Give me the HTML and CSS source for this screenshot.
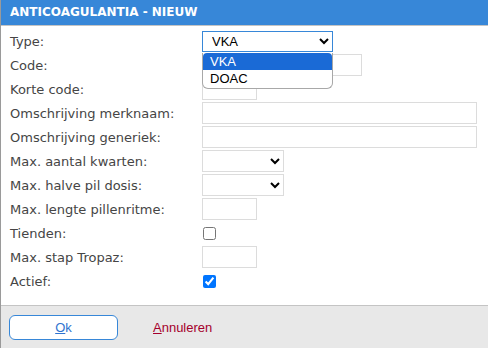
FILE: index.html
```html
<!DOCTYPE html>
<html lang="nl">
<head>
    <meta charset="UTF-8">
    <title>Anticoagulantia - Nieuw</title>
    <link rel="stylesheet" href="styles.css">
</head>
<body>
    <div class="dialog">
        <div class="dialog-header">ANTICOAGULANTIA - NIEUW</div>

        <div class="form">
            <label class="form-label">Type:</label>
            <div class="form-field field-type">
                <select class="select select-type focused">
                    <option>VKA</option>
                    <option>DOAC</option>
                </select>
                <div class="dropdown">
                    <div class="dropdown-item selected">VKA</div>
                    <div class="dropdown-item">DOAC</div>
                </div>
            </div>

            <label class="form-label">Code:</label>
            <div class="form-field"><input class="input input-medium" type="text"></div>

            <label class="form-label">Korte code:</label>
            <div class="form-field"><input class="input input-small" type="text"></div>

            <label class="form-label">Omschrijving merknaam:</label>
            <div class="form-field"><input class="input input-wide" type="text"></div>

            <label class="form-label">Omschrijving generiek:</label>
            <div class="form-field"><input class="input input-wide" type="text"></div>

            <label class="form-label">Max. aantal kwarten:</label>
            <div class="form-field"><select class="select select-small"><option></option></select></div>

            <label class="form-label">Max. halve pil dosis:</label>
            <div class="form-field"><select class="select select-small"><option></option></select></div>

            <label class="form-label">Max. lengte pillenritme:</label>
            <div class="form-field"><input class="input input-small" type="text"></div>

            <label class="form-label">Tienden:</label>
            <div class="form-field"><input class="checkbox" type="checkbox"></div>

            <label class="form-label">Max. stap Tropaz:</label>
            <div class="form-field"><input class="input input-small" type="text"></div>

            <label class="form-label">Actief:</label>
            <div class="form-field"><input class="checkbox" type="checkbox" checked></div>
        </div>

        <div class="dialog-footer">
            <button class="btn-ok"><u>O</u>k</button>
            <a class="link-cancel" href="#"><u>A</u>nnuleren</a>
        </div>
    </div>
</body>
</html>
```

FILE: styles.css
```css
* {
    margin: 0;
    padding: 0;
    box-sizing: border-box;
}

body {
    font-family: "DejaVu Sans", Verdana, sans-serif;
    background: #ffffff;
    width: 488px;
    height: 348px;
    overflow: hidden;
}

.dialog {
    height: 348px;
    border-left: 1px solid #9a9a9a;
    display: flex;
    flex-direction: column;
}

.dialog-header {
    height: 26px;
    line-height: 25px;
    padding-left: 9px;
    background: #3787d8;
    border-bottom: 1px solid #c4c4c4;
    color: #ffffff;
    font-size: 12px;
    font-weight: bold;
}

.form {
    display: grid;
    grid-template-columns: 192px 1fr;
    grid-auto-rows: 24px;
    padding: 3px 0 12px 9px;
}

.form-label {
    display: flex;
    align-items: center;
    font-size: 13px;
    color: #454545;
}

.form-field {
    display: flex;
    align-items: center;
}

.field-type {
    position: relative;
}

.input {
    height: 22px;
    border: 1px solid #dcdcdc;
    background: #ffffff;
    font-family: "Liberation Sans", Arial, sans-serif;
    font-size: 13px;
}

.input-small {
    width: 55px;
}

.input-medium {
    width: 160px;
}

.input-wide {
    width: 275px;
}

.select {
    height: 22px;
    border: 1px solid #dcdcdc;
    border-radius: 0;
    background: #ffffff;
    font-family: "Liberation Sans", Arial, sans-serif;
    font-size: 13px;
    color: #000000;
    padding-left: 5px;
}

.select-type {
    width: 131px;
    height: 21px;
}

.select-small {
    width: 82px;
}

.select.focused {
    border-color: #3787d8;
}

.dropdown {
    position: absolute;
    left: 0;
    top: 24px;
    width: 131px;
    background: #ffffff;
    border: 1px solid #a8a8a8;
    border-top: none;
    border-radius: 0 0 6px 6px;
    font-family: "Liberation Sans", Arial, sans-serif;
    font-size: 13px;
    padding-bottom: 1px;
    z-index: 2;
    overflow: hidden;
}

.dropdown-item {
    height: 17px;
    line-height: 17px;
    padding-left: 7px;
    color: #000000;
}

.dropdown-item.selected {
    background: #1a6ad6;
    color: #ffffff;
    border-radius: 4px 4px 0 0;
}

.checkbox {
    width: 13px;
    height: 13px;
    margin-left: 1px;
}

.dialog-footer {
    flex: 1;
    background: #e8e8e8;
    border-top: 1px solid #c4c4c4;
    display: flex;
    align-items: center;
    padding-left: 8px;
    gap: 35px;
}

.btn-ok {
    width: 109px;
    height: 25px;
    background: #ffffff;
    border: 1px solid #3787d8;
    border-radius: 6px;
    font-family: "Liberation Sans", Arial, sans-serif;
    font-size: 13px;
    color: #2f73cf;
}

.link-cancel {
    font-family: "Liberation Sans", Arial, sans-serif;
    font-size: 13px;
    color: #a5002c;
    text-decoration: none;
}
```
